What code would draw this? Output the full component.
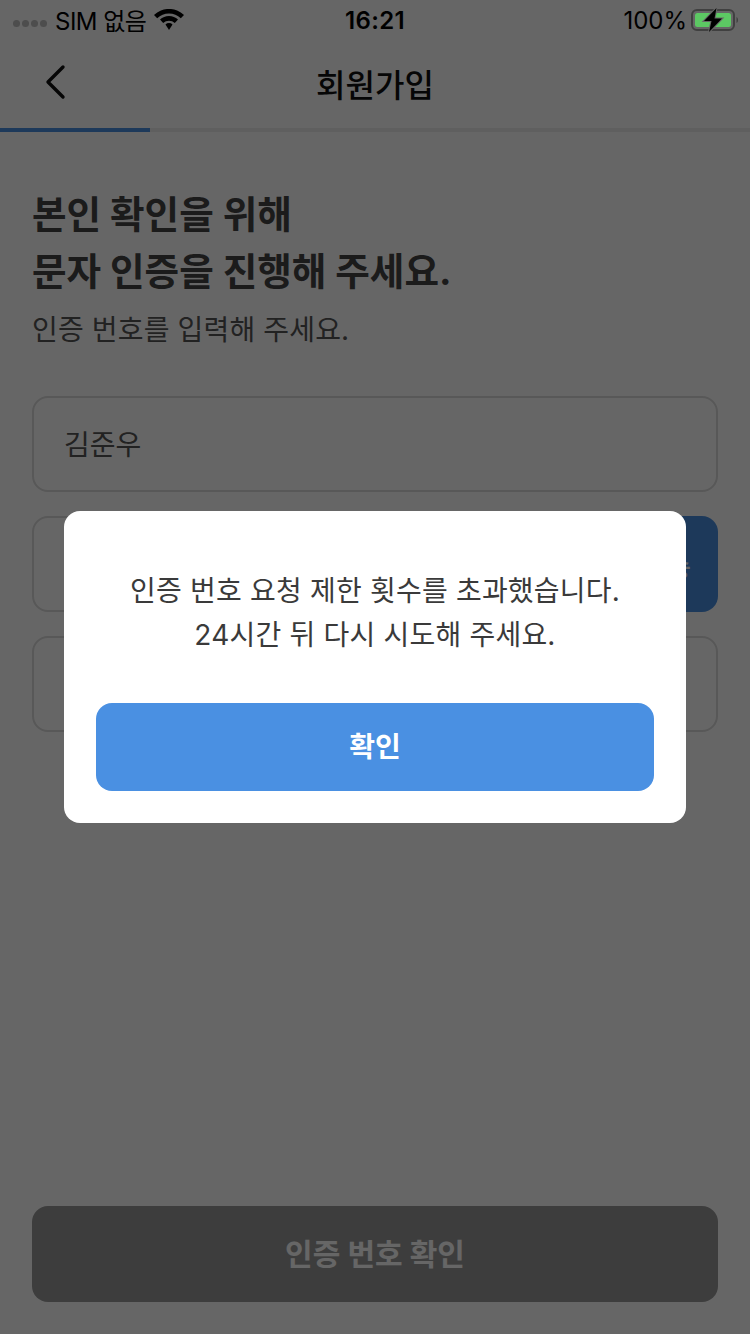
<script>
  const strings = { heading: ['본인 확인을 위해', '문자 인증을 진행해 주세요.'] };
</script>

<div class="page">
  <div class="status">
    <div class="status-left">
      <div class="dots"><i></i><i></i><i></i><i></i></div>
      <span class="carrier">SIM 없음</span>
      <svg class="wifi" width="30" height="22" viewBox="0 0 30 22">
        <path d="M0 6A21.500 21.500 0 0 1 30 6L26.800 9.300A17 17 0 0 0 3.200 9.300Z" fill="#000"/>
        <path d="M6 10.500A13 13 0 0 1 24 10.500L20.800 14A8.500 8.500 0 0 0 9.200 14Z" fill="#000"/>
        <path d="M11.500 15.500A5 5 0 0 1 18.500 15.500L15 21Z" fill="#000"/>
      </svg>
    </div>
    <div class="time">16:21</div>
    <div class="status-right">
      <span>100%</span>
      <svg class="battery" width="48" height="26" viewBox="0 0 48 26">
        <rect x="1" y="3" width="42" height="20" rx="5" fill="none" stroke="#404040" stroke-width="2"/>
        <rect x="4" y="6" width="36" height="14" rx="2.500" fill="#5cc863"/>
        <path d="M45.500 10v6c1-.5 1.500-1.500 1.500-3s-.5-2.500-1.500-3Z" fill="#404040"/>
        <path d="M25.500 1 13 14h7.500L18 25 31 11.500h-7.500Z" fill="#000" stroke="#666" stroke-width="2" paint-order="stroke"/>
      </svg>
    </div>
  </div>

  <header class="nav">
    <svg class="back" width="24" height="36" viewBox="0 0 24 36">
      <path d="M20 3 5 18l15 15" fill="none" stroke="#111" stroke-width="3.400" stroke-linecap="round" stroke-linejoin="round"/>
    </svg>
    <h1>회원가입</h1>
  </header>
  <div class="progress"><div class="progress-fill"></div></div>

  <main class="content">
    <h2>{strings.heading[0]}<br />{strings.heading[1]}</h2>
    <p class="sub">인증 번호를 입력해 주세요.</p>

    <div class="fields">
      <div class="field name">김준우</div>
      <div class="row">
        <div class="field grow"></div>
        <div class="req">재전송</div>
      </div>
      <div class="field"></div>
    </div>

    <div class="submit">인증 번호 확인</div>
  </main>

  <div class="overlay">
    <div class="dialog">
      <p>인증 번호 요청 제한 횟수를 초과했습니다.<br />24시간 뒤 다시 시도해 주세요.</p>
      <button type="button">확인</button>
    </div>
  </div>
</div>

<style>
  :global(body) {
    margin: 0;
    background: #fff;
  }
  .page {
    position: relative;
    width: 750px;
    height: 1334px;
    overflow: hidden;
    display: flex;
    flex-direction: column;
    font-family: "Inter", "Noto Sans CJK KR", sans-serif;
    color: #212121;
    background: #fff;
  }
  .status {
    position: relative;
    z-index: 2;
    height: 40px;
    flex: none;
    display: grid;
    grid-template-columns: 1fr auto 1fr;
    align-items: center;
    font-size: 24px;
    color: #000;
  }
  .status-left {
    display: flex;
    align-items: center;
    padding-left: 13px;
  }
  .dots {
    display: flex;
    gap: 2px;
    margin-right: 8px;
    margin-top: 6px;
  }
  .dots i {
    width: 7px;
    height: 7px;
    border-radius: 50%;
    background: #4d4d4d;
  }
  .carrier {
    margin-right: 8px;
    font-size: 24px;
    letter-spacing: -0.5px;
    margin-top: -2px;
  }
  .wifi {
    display: block;
  }
  .time {
    font-weight: 600;
    font-size: 24px;
    letter-spacing: 0.3px;
  }
  .status-right {
    display: flex;
    align-items: center;
    justify-content: flex-end;
    gap: 4px;
    padding-right: 11px;
  }
  .battery {
    display: block;
  }
  .nav {
    position: relative;
    height: 88px;
    flex: none;
    display: flex;
    align-items: center;
    justify-content: center;
    padding-bottom: 3px;
    box-sizing: border-box;
  }
  .back {
    position: absolute;
    left: 43px;
    top: 24px;
  }
  h1 {
    margin: 0;
    font-size: 32px;
    font-weight: 500;
    color: #111;
  }
  .progress {
    height: 4px;
    flex: none;
    background: #eee;
  }
  .progress-fill {
    width: 150px;
    height: 100%;
    background: #4a90e2;
  }
  .content {
    flex: 1;
    display: flex;
    flex-direction: column;
    padding: 54px 32px 32px;
  }
  h2 {
    margin: 0;
    font-size: 37.6px;
    line-height: 57px;
    font-weight: 700;
    color: #444;
  }
  .sub {
    margin: 10px 0 0;
    font-size: 28px;
    line-height: 40px;
    letter-spacing: 0.15px;
    color: #555;
  }
  .fields {
    margin-top: 46px;
    display: flex;
    flex-direction: column;
    gap: 24px;
  }
  .row {
    display: flex;
    gap: 16px;
  }
  .field {
    height: 96px;
    box-sizing: border-box;
    border: 2px solid #dcdcdc;
    border-radius: 16px;
    padding: 0 30px 3px;
    display: flex;
    align-items: center;
    font-size: 28px;
    color: #555;
  }
  .grow {
    flex: 1;
  }
  .req {
    width: 138px;
    height: 96px;
    box-sizing: border-box;
    padding: 3px 27px 0 0;
    border-radius: 16px;
    background: #4a90e2;
    color: #fff;
    font-size: 26px;
    font-weight: 500;
    display: flex;
    align-items: center;
    justify-content: flex-end;
  }
  .submit {
    margin-top: auto;
    height: 96px;
    box-sizing: border-box;
    padding-bottom: 4px;
    border-radius: 16px;
    background: #999;
    color: #fff;
    font-size: 30px;
    font-weight: 700;
    display: flex;
    align-items: center;
    justify-content: center;
  }
  .overlay {
    position: absolute;
    inset: 0;
    background: rgba(0, 0, 0, 0.6);
  }
  .dialog {
    position: absolute;
    left: 64px;
    top: 511px;
    width: 622px;
    height: 312px;
    box-sizing: border-box;
    background: #fff;
    border-radius: 16px;
    padding: 58px 32px 32px;
    display: flex;
    flex-direction: column;
  }
  .dialog p {
    margin: 0;
    text-align: center;
    font-size: 28px;
    line-height: 44px;
    letter-spacing: 0.2px;
    color: #3a3a3a;
  }
  .dialog button {
    margin-top: auto;
    height: 88px;
    border: none;
    border-radius: 16px;
    background: #4a90e2;
    color: #fff;
    font-family: inherit;
    font-size: 28px;
    font-weight: 700;
    padding: 0 0 4px;
  }
</style>
